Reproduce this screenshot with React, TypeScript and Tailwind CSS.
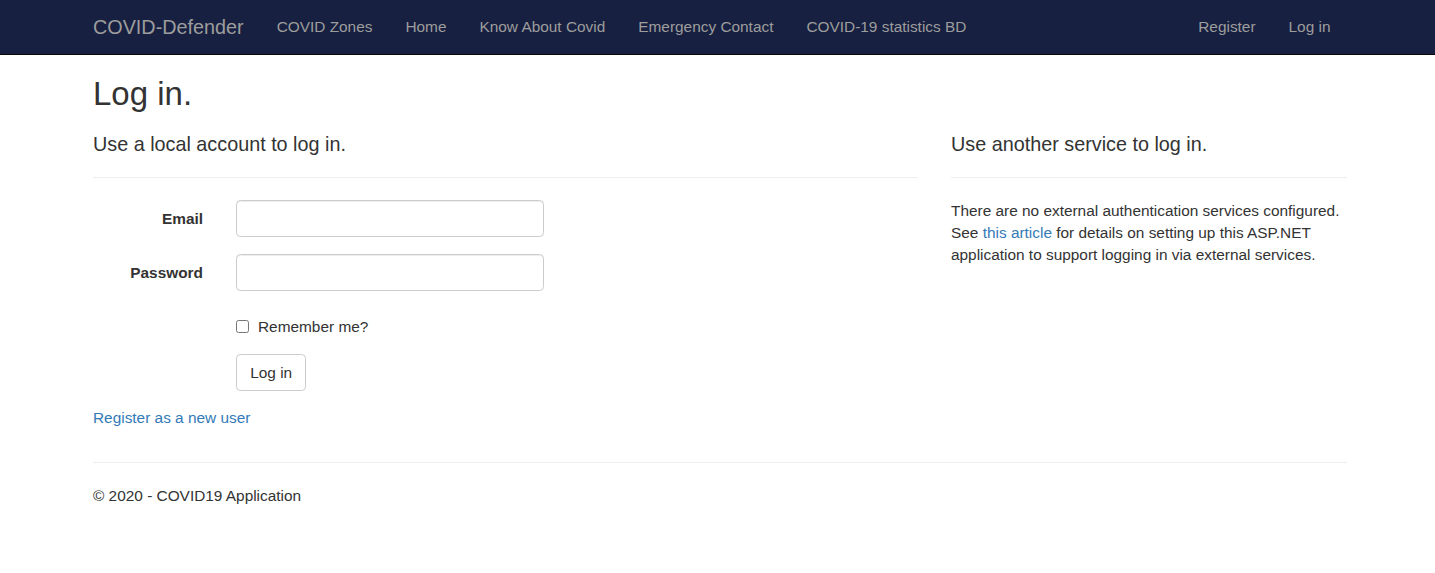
import React from "react";

const navLinks = ["COVID Zones", "Home", "Know About Covid", "Emergency Contact", "COVID-19 statistics BD"];

export default function App() {
  return (
    <div className="min-h-[573px] bg-white text-[#333333] font-['Liberation_Sans',Arial,sans-serif] text-[15.4px] leading-[22px]">
      {/* Navbar */}
      <nav className="h-[55px] bg-[#172040] border-b border-[#080808]">
        <div className="ml-[76.5px] w-[1287px] px-[16.5px] h-full flex justify-between">
          <div className="flex">
            <a className="-ml-[16.5px] px-[16.5px] pt-[15.5px] pb-[17.5px] text-[19.8px] leading-[22px] text-[#9d9d9d] whitespace-nowrap">
              COVID-Defender
            </a>
            <ul className="flex">
              {navLinks.map((l) => (
                <li key={l}>
                  <a className="block px-[16.5px] pt-[15.5px] pb-[17.5px] leading-[22px] text-[#9d9d9d] whitespace-nowrap">{l}</a>
                </li>
              ))}
            </ul>
          </div>
          <ul className="flex">
            <li>
              <a className="block px-[16.5px] pt-[15.5px] pb-[17.5px] leading-[22px] text-[#9d9d9d]">Register</a>
            </li>
            <li>
              <a className="block px-[16.5px] pt-[15.5px] pb-[17.5px] leading-[22px] text-[#9d9d9d]">Log in</a>
            </li>
          </ul>
        </div>
      </nav>

      {/* Body */}
      <div className="ml-[76.5px] w-[1287px] px-[16.5px]">
        <h2 className="mt-[21px] mb-[11px] text-[33px] leading-[1.1] font-normal">Log in.</h2>
        <div className="flex gap-[33px]">
          <section className="w-[825px]">
            <h4 className="mt-[11px] text-[19.8px] leading-[1.1] font-normal">Use a local account to log in.</h4>
            <hr className="mt-[21px] mb-[22px] border-0 border-t border-[#eeeeee]" />
            <div className="flex gap-[33px] mb-[16.5px]">
              <label className="w-[110px] pt-[7.7px] text-right font-bold leading-[22px]">Email</label>
              <input
                type="text"
                className="w-[308px] h-[37.4px] px-[13.2px] border border-[#cccccc] rounded-[4.4px] shadow-[inset_0_1px_1px_rgba(0,0,0,0.075)] outline-none"
              />
            </div>
            <div className="flex gap-[33px] mb-[16.5px]">
              <label className="w-[110px] pt-[7.7px] text-right font-bold leading-[22px]">Password</label>
              <input
                type="password"
                className="w-[308px] h-[37.4px] px-[13.2px] border border-[#cccccc] rounded-[4.4px] shadow-[inset_0_1px_1px_rgba(0,0,0,0.075)] outline-none"
              />
            </div>
            <div className="ml-[143px] pt-[7.7px] mb-[16.5px]">
              <label className="flex items-center leading-[22px]">
                <input type="checkbox" className="w-[13px] h-[13px] m-0" />
                <span className="ml-[9px]">Remember me?</span>
              </label>
            </div>
            <div className="ml-[143px] mb-[15.5px]">
              <button className="h-[37.4px] px-[13.2px] border border-[#cccccc] rounded-[4.4px] bg-white text-[#333333] leading-[22px]">
                Log in
              </button>
            </div>
            <p className="mb-[11px] leading-[22px]">
              <a className="text-[#337ab7]">Register as a new user</a>
            </p>
          </section>
          <section className="w-[396px]">
            <h4 className="mt-[11px] text-[19.8px] leading-[1.1] font-normal">Use another service to log in.</h4>
            <hr className="mt-[21px] mb-[22px] border-0 border-t border-[#eeeeee]" />
            <p className="mb-[11px] leading-[22px]">
              There are no external authentication services configured. See{" "}
              <a className="text-[#337ab7]">this article</a> for details on setting up this ASP.NET application to
              support logging in via external services.
            </p>
          </section>
        </div>
        <hr className="mt-[22px] mb-[22px] border-0 border-t border-[#eeeeee]" />
        <footer>
          <p className="mb-[11px] leading-[22px]">© 2020 - COVID19 Application</p>
        </footer>
      </div>
    </div>
  );
}
